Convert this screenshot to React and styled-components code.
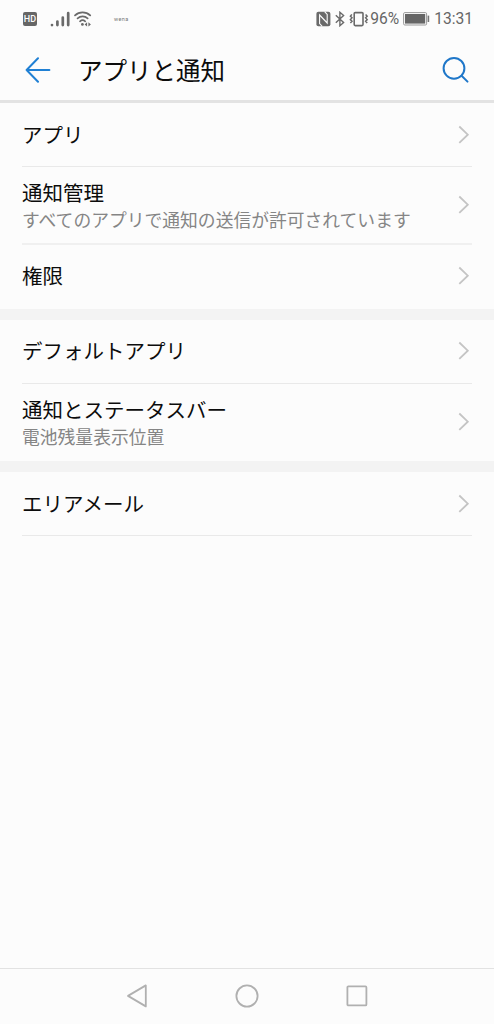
import React from "react";
import styled, { createGlobalStyle } from "styled-components";

const GlobalStyle = createGlobalStyle`
  * {
    box-sizing: border-box;
  }
  body {
    margin: 0;
    background: #fcfcfc;
    font-family: Roboto, "Noto Sans CJK JP", sans-serif;
  }
  svg {
    display: block;
    flex: none;
  }
`;

//Data
const groups = [
  [
    { title: "アプリ" },
    {
      title: "通知管理",
      note: "すべてのアプリで通知の送信が許可されています",
    },
    { title: "権限" },
  ],
  [
    { title: "デフォルトアプリ" },
    { title: "通知とステータスバー", note: "電池残量表示位置" },
  ],
  [{ title: "エリアメール" }],
];

//status icons
const SignalIcon = () => (
  <svg width="20" height="18" viewBox="0 0 20 18" fill="none" stroke="#6a6a6a" strokeWidth="2.7" strokeLinecap="round">
    <path d="M2 15v.1M7.4 11.6v3.5M12.8 7.6v7.5M18.2 3.2v11.9" />
  </svg>
);

const WifiIcon = () => (
  <svg width="18" height="18" viewBox="0 0 18 18" fill="none" stroke="#6a6a6a" strokeWidth="1.7" strokeLinecap="round">
    <path d="M1 5.4a11 11 0 0 1 15.2 0M3.6 8.4a7.4 7.4 0 0 1 10 0M6 11.3a4 4 0 0 1 5.2 0" />
    <circle cx="8.4" cy="14.4" r="1.4" fill="#6a6a6a" stroke="none" />
    <path d="M13.1 12.2v4.4l-2.5-2.2zM14.4 12.2v4.4l2.5-2.2z" fill="#6a6a6a" stroke="none" />
  </svg>
);

const NfcIcon = () => (
  <svg width="15" height="16" viewBox="0 0 15 16">
    <rect x=".4" y=".8" width="14" height="14.4" rx="2" fill="#6a6a6a" />
    <path d="M6.2 15.4L3.6 12.6V4l6.2 6.6M8.6.6l2.6 2.8V12L5 5.4" fill="none" stroke="#fcfcfc" strokeWidth="1.1" />
  </svg>
);

const BluetoothIcon = () => (
  <svg width="10" height="16" viewBox="0 0 10 16" fill="none" stroke="#6a6a6a" strokeWidth="1.4">
    <path d="M.8 4.2l7.8 7.2-3.7 3.3V1.3l3.7 3.3L.8 11.8" />
  </svg>
);

const VibrateIcon = () => (
  <svg width="20" height="16" viewBox="0 0 20 16" fill="none" stroke="#6a6a6a">
    <rect x="5.2" y="1.6" width="8.8" height="13" rx="1" strokeWidth="1.6" />
    <path d="M2.8 3.4L1.4 5.2l1.6 1.6-1.6 1.8L3 10.2 1.4 12M16.6 3.4l1.6 1.8-1.6 1.6 1.6 1.8-1.6 1.6 1.6 1.8" strokeWidth="1.5" />
  </svg>
);

const BatteryIcon = () => (
  <svg width="27" height="14" viewBox="0 0 27 14">
    <rect x=".6" y=".6" width="23" height="12.4" rx="1.2" fill="#fcfcfc" stroke="#999" />
    <rect x="2" y="2" width="20.2" height="9.6" fill="#666" />
    <path d="M24.6 3.6h1.6v6.4h-1.6z" fill="#777" />
  </svg>
);

//header and row icons
const BackIcon = () => (
  <svg width="26" height="26" viewBox="0 0 26 26" fill="none" stroke="#2080d4" strokeWidth="2" strokeLinecap="round" strokeLinejoin="round">
    <path d="M24.4 13H1.6M13 1.3L1.6 13 13 24.7" />
  </svg>
);

const SearchIcon = () => (
  <svg width="28" height="28" viewBox="0 0 28 28" fill="none" stroke="#1f77c9" strokeWidth="2" strokeLinecap="round">
    <circle cx="12" cy="12.3" r="10.4" />
    <path d="M19.6 19.7l5.9 5.9" />
  </svg>
);

const ChevronIcon = () => (
  <svg width="12" height="20" viewBox="0 0 12 20" fill="none" stroke="#c4c4c4" strokeWidth="1.8">
    <path d="M1.3 1.5l8.5 8.2-8.5 8.2" />
  </svg>
);

const App = () => {
  return (
    <>
      <GlobalStyle />
      <Screen>
        <StatusBar>
          <HdBadge>HD</HdBadge>
          <SignalIcon />
          <WifiIcon />
          <Carrier>wena</Carrier>
          <StatusRight>
            <NfcIcon />
            <BluetoothIcon />
            <VibrateIcon />
            <Percent>96%</Percent>
            <BatteryIcon />
            <Clock>13:31</Clock>
          </StatusRight>
        </StatusBar>
        <Header>
          <BackIcon />
          <h1>アプリと通知</h1>
          <SearchIcon />
        </Header>
        <List>
          {groups.map((rows, i) => (
            <Group key={i}>
              {rows.map((row) => (
                <Row key={row.title} $tall={Boolean(row.note)}>
                  <RowText $tall={Boolean(row.note)}>
                    <h2>{row.title}</h2>
                    {row.note && <p>{row.note}</p>}
                  </RowText>
                  <ChevronIcon />
                </Row>
              ))}
            </Group>
          ))}
        </List>
        <NavBar>
          <svg width="22" height="24" viewBox="0 0 22 24" fill="none" stroke="#b0b0b0" strokeWidth="1.8" strokeLinejoin="round">
            <path d="M19.8 1.4v21L2 11.9z" />
          </svg>
          <svg width="24" height="24" viewBox="0 0 24 24" fill="none" stroke="#b0b0b0" strokeWidth="1.8">
            <circle cx="12" cy="12" r="10.6" />
          </svg>
          <svg width="22" height="22" viewBox="0 0 22 22" fill="none" stroke="#b0b0b0" strokeWidth="1.8">
            <rect x="1.4" y="1.4" width="19" height="19" rx="1" />
          </svg>
        </NavBar>
      </Screen>
    </>
  );
};

const Screen = styled.div`
  display: flex;
  flex-direction: column;
  width: 494px;
  height: 1024px;
  overflow: hidden;
  background: #fcfcfc;
  color: #0c0c0c;
`;

const StatusBar = styled.div`
  display: flex;
  align-items: center;
  height: 37px;
  padding: 0 21px 0 23px;
  color: #666;
  & > svg:nth-of-type(1) {
    margin-left: 13px;
  }
  & > svg:nth-of-type(2) {
    margin-left: 4px;
  }
`;

const HdBadge = styled.span`
  width: 14px;
  height: 14px;
  border-radius: 2px;
  background: #666;
  color: #fcfcfc;
  font-size: 9px;
  font-weight: 500;
  line-height: 14px;
  text-align: center;
`;

const Carrier = styled.span`
  margin-left: 22px;
  font-size: 5.5px;
  letter-spacing: 0.4px;
  color: #777;
`;

const StatusRight = styled.div`
  display: flex;
  align-items: center;
  margin-left: auto;
  font-size: 15.6px;
  line-height: 20px;
  & > svg:nth-of-type(2) {
    margin-left: 4px;
  }
  & > svg:nth-of-type(3) {
    margin-left: 4px;
  }
`;

const Percent = styled.span`
  width: 34px;
  padding-left: 1px;
`;

const Clock = styled.span`
  margin-left: 4px;
`;

const Header = styled.header`
  display: flex;
  align-items: center;
  height: 66px;
  padding: 3px 24px 0 25px;
  border-bottom: 3px solid #e3e3e3;
  h1 {
    flex: 1;
    margin: 0 0 0 27px;
    padding-top: 3px;
    font-size: 24.5px;
    font-weight: 400;
    line-height: 36px;
  }
`;

const List = styled.main`
  flex: 1;
`;

const Group = styled.section`
  & + & {
    border-top: 11px solid #f3f3f3;
  }
`;

const Row = styled.div`
  display: flex;
  align-items: center;
  justify-content: space-between;
  height: ${({ $tall }) => ($tall ? "77.5px" : "64px")};
  margin: 0 22px;
  padding-right: 2px;
  border-bottom: ${({ $tall }) =>
    $tall ? "2px solid #f0f0f0" : "1px solid #e9e9e9"};
  ${Group}:not(:last-child) &:last-child {
    padding-bottom: 1px;
    border-bottom: none;
  }
`;

const RowText = styled.div`
  padding-top: ${({ $tall }) => ($tall ? "4px" : "2.4px")};
  h2,
  p {
    margin: 0;
    font-weight: 400;
    white-space: nowrap;
  }
  h2 {
    font-size: 20.5px;
    line-height: 28px;
  }
  p {
    font-size: 17.8px;
    line-height: 25px;
    color: #858585;
  }
`;

const NavBar = styled.nav`
  display: flex;
  align-items: center;
  justify-content: space-between;
  height: 56px;
  padding: 0 126px 2px;
  border-top: 1px solid #e2e2e2;
`;

export default App;
